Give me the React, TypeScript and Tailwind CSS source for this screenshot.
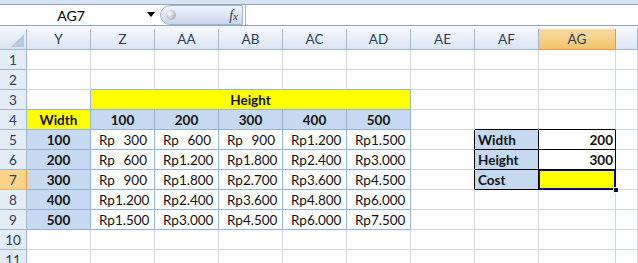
import type { ReactNode } from 'react'

const FONT = { fontFamily: 'Lato, "Noto Sans", sans-serif' }

const COLS = [
  { name: 'Y', w: 'w-[64px]' },
  { name: 'Z', w: 'w-[64px]' },
  { name: 'AA', w: 'w-[64px]' },
  { name: 'AB', w: 'w-[64px]' },
  { name: 'AC', w: 'w-[64px]' },
  { name: 'AD', w: 'w-[64px]' },
  { name: 'AE', w: 'w-[64px]' },
  { name: 'AF', w: 'w-[64px]' },
  { name: 'AG', w: 'w-[77px]' },
  { name: '', w: 'flex-1' },
]

const SIZES = [100, 200, 300, 400, 500]

const fmt = (n: number) => n.toLocaleString('de-DE')

type Cell = { bg: string; br: string; bb: string; content?: ReactNode; extra?: ReactNode }

const GRID = 'border-r-[#d0d7e5]'
const GRIDB = 'border-b-[#d0d7e5]'
const BLUE = 'border-r-[#95b3d7]'
const BLUEB = 'border-b-[#95b3d7]'
const BLK = 'border-r-black'
const BLKB = 'border-b-black'

function Money({ v }: { v: number }) {
  return (
    <div className="flex w-full justify-between pl-[8px] pr-[7px]">
      <span>Rp</span>
      <span>{fmt(v)}</span>
    </div>
  )
}

function getCell(row: number, col: number): Cell {
  const c: Cell = { bg: 'bg-white', br: GRID, bb: GRIDB }

  // blue price table
  if (row === 2 && col >= 1 && col <= 5) c.bb = BLUEB
  if (row === 3 && col === 0) {
    c.br = BLUE
    c.bb = BLUEB
  }
  if (row >= 4 && row <= 9 && col <= 5) {
    c.br = BLUE
    c.bb = BLUEB
    if (row === 4 && col === 0) {
      c.bg = 'bg-[#ffff00]'
      c.content = <div className="w-full text-center font-bold">Width</div>
    } else if (row === 4) {
      c.bg = 'bg-[#c5d9f1]'
      c.content = <div className="w-full text-center font-bold">{SIZES[col - 1]}</div>
    } else if (col === 0) {
      c.bg = 'bg-[#c5d9f1]'
      c.content = <div className="w-full text-center font-bold">{SIZES[row - 5]}</div>
    } else {
      c.content = <Money v={SIZES[row - 5] * SIZES[col - 1] * 3 / 100} />
    }
  }

  // input box
  if (row === 4 && (col === 7 || col === 8)) c.bb = BLKB
  if (row >= 5 && row <= 7 && col === 6) c.br = BLK
  if (row >= 5 && row <= 7 && (col === 7 || col === 8)) {
    c.br = BLK
    c.bb = BLKB
    if (col === 7) {
      c.bg = 'bg-[#c5d9f1]'
      c.content = (
        <div className="w-full pl-[3px] font-bold">{['Width', 'Height', 'Cost'][row - 5]}</div>
      )
    } else if (row < 7) {
      c.content = <div className="w-full pr-[2px] text-right font-bold">{row === 5 ? 200 : 300}</div>
    } else {
      c.bg = 'bg-[#ffff00]'
      c.extra = (
        <>
          <div className="pointer-events-none absolute inset-0 border-[1.5px] border-[#0000ff]" />
          <div className="absolute -bottom-[4px] -right-[4px] z-10 h-[6px] w-[6px] border border-white bg-black" />
        </>
      )
    }
  }
  return c
}

function Row({ n }: { n: number }) {
  const selected = n === 7
  const cells: ReactNode[] = []
  for (let i = 0; i < COLS.length; i++) {
    const col = COLS[i]
    if (n === 3 && i === 1) {
      cells.push(
        <div
          key="merged"
          className="flex h-[20px] w-[320px] shrink-0 items-center justify-center border-r border-b border-r-[#95b3d7] border-b-[#95b3d7] bg-[#ffff00] font-bold"
        >
          Height
        </div>
      )
      i = 5
      continue
    }
    const c = getCell(n, i)
    cells.push(
      <div
        key={i}
        className={`relative flex h-[20px] shrink-0 items-center border-r border-b pt-[1px] ${col.w} ${c.bg} ${c.br} ${c.bb}`}
      >
        {c.content}
        {c.extra}
      </div>
    )
  }
  return (
    <div className="flex h-[20px] text-[13.5px] leading-[18px] text-[#111]">
      <div
        className={`flex h-[20px] w-[27px] shrink-0 items-center justify-center border-r border-b text-[#27415f] ${
          selected
            ? 'border-r-[#f29536] border-b-[#f2b560] bg-[#f8d48a]'
            : 'border-r-[#9eb6ce] border-b-[#9eb6ce] bg-[#e4ecf7]'
        }`}
      >
        {n}
      </div>
      {cells}
    </div>
  )
}

export default function App() {
  return (
    <div className="h-[263px] w-[638px] overflow-hidden bg-white select-none" style={FONT}>
      {/* ribbon edge */}
      <div className="h-[4px] bg-[#d6e3f2]" />
      <div className="h-px bg-[#8ea4c1]" />

      {/* formula bar */}
      <div className="flex h-[20px] bg-white">
        <div className="relative flex w-[160px] shrink-0 items-center">
          <span className="w-[142px] text-center text-[14px] text-black">AG7</span>
          <svg className="absolute left-[147px] top-[7px]" width="8" height="5" viewBox="0 0 8 5">
            <path d="M0 0h8L4 5z" fill="#000" />
          </svg>
        </div>
        <div className="relative flex w-[83px] shrink-0 items-center justify-end rounded-l-[10px] border border-[#a5b8d1] bg-gradient-to-b from-[#eef3fa] via-[#dde6f2] to-[#c7d5e8] pr-[4px]">
          <div className="absolute left-[5px] top-[4px] h-[10px] w-[10px] rounded-full bg-[radial-gradient(circle_at_35%_35%,#ffffff,#b8bec8_60%,#8d95a3)]" />
          <span className="text-[14px] italic text-[#3a3a3a]" style={{ fontFamily: '"Liberation Serif", serif' }}>
            f<span className="text-[11px]">x</span>
          </span>
        </div>
        <div className="ml-[2px] w-px bg-[#a5b8d1]" />
        <div className="flex-1 bg-white" />
      </div>
      <div className="h-px bg-[#8ea4c1]" />
      <div className="h-[3px] bg-[#f3f6fb]" />

      {/* column headers */}
      <div className="flex h-[21px] text-[13.5px] text-[#27415f]">
        <div className="relative w-[27px] shrink-0 border-r border-b border-r-[#9eb6ce] border-b-[#9eb6ce] bg-gradient-to-b from-[#f2f6fb] to-[#d9e4f2]">
          <svg className="absolute bottom-[2px] right-[2px]" width="13" height="13" viewBox="0 0 13 13">
            <path d="M13 0V13H0z" fill="#b7c9e2" />
          </svg>
        </div>
        {COLS.map((c, i) => (
          <div
            key={i}
            className={`flex shrink-0 items-center justify-center border-r border-b ${c.w} ${
              c.name === 'AG'
                ? 'border-[#f29536] bg-gradient-to-b from-[#f9dca4] to-[#f2c46a]'
                : 'border-r-[#9eb6ce] border-b-[#9eb6ce] bg-gradient-to-b from-[#f4f7fc] to-[#dbe5f2]'
            }`}
          >
            {c.name}
          </div>
        ))}
      </div>

      {[1, 2, 3, 4, 5, 6, 7, 8, 9, 10, 11].map((n) => (
        <Row key={n} n={n} />
      ))}
    </div>
  )
}
